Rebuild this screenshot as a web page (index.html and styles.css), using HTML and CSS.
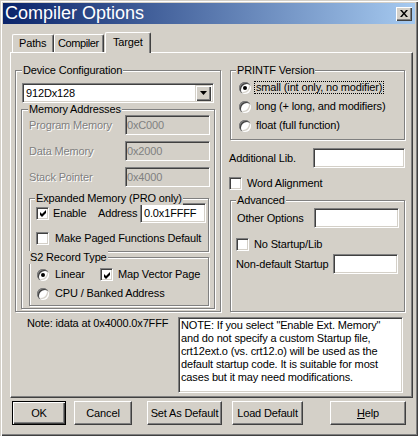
FILE: index.html
```html
<!DOCTYPE html>
<html>
<head>
<meta charset="utf-8">
<title>Compiler Options</title>
<link rel="stylesheet" href="styles.css">
</head>
<body>
<div class="window">
  <div class="titlebar">
    <span class="title">Compiler Options</span>
    <span class="close"><svg width="8" height="7" viewBox="0 0 8 7"><path d="M0 0h2l2 2.5 2-2.5h2l-3 3.5 3 3.5h-2l-2-2.5-2 2.5h-2l3-3.5z" fill="#000"/></svg></span>
  </div>
  <div class="tabs">
    <div class="tab t-paths">Paths</div>
    <div class="tab t-compiler">Compiler</div>
    <div class="tab t-target active">Target</div>
  </div>
  <div class="panel">
    <div class="toprow">
      <div class="group device">
        <span class="legend lg-device">Device Configuration</span>
        <div class="select"><span class="select-text">912Dx128</span><span class="dd-btn"><svg width="7" height="4" viewBox="0 0 7 4"><polygon points="0,0 7,0 3.5,4" fill="#000"/></svg></span></div>
        <div class="group mem">
          <span class="legend lg-mem">Memory Addresses</span>
          <div class="memrows">
            <div class="memrow"><span class="mlabel disabled">Program Memory</span><span class="input dis mem-in">0xC000</span></div>
            <div class="memrow"><span class="mlabel disabled">Data Memory</span><span class="input dis mem-in">0x2000</span></div>
            <div class="memrow"><span class="mlabel disabled">Stack Pointer</span><span class="input dis mem-in">0x4000</span></div>
          </div>
          <div class="group expanded">
            <span class="legend lg-exp">Expanded Memory (PRO only)</span>
            <div class="exprow1">
              <span class="check checked"><svg width="9" height="9" viewBox="0 0 9 9"><path d="M1 3l2 2 4-4v3l-4 4-2-2z" fill="#000"/></svg></span>
              <span class="enable-lbl">Enable</span>
              <span class="addr-lbl">Address</span>
              <span class="input addr-in">0.0x1FFFF</span>
            </div>
            <div class="exprow2">
              <span class="check"></span>
              <span class="paged-lbl">Make Paged Functions Default</span>
            </div>
          </div>
          <div class="group s2">
            <span class="legend lg-s2">S2 Record Type</span>
            <div class="s2row1">
              <span class="linear-item"><span class="radio on"></span><span class="rlbl">Linear</span></span>
              <span class="check checked"><svg width="9" height="9" viewBox="0 0 9 9"><path d="M1 3l2 2 4-4v3l-4 4-2-2z" fill="#000"/></svg></span>
              <span class="mvp-lbl">Map Vector Page</span>
            </div>
            <div class="s2row2">
              <span class="radio"></span><span class="rlbl">CPU / Banked Address</span>
            </div>
          </div>
        </div>
      </div>
      <div class="rightcol">
        <div class="group printf">
          <span class="legend lg-printf">PRINTF Version</span>
          <div class="prow first"><span class="radio on"></span><span class="plbl focus">small (int only, no modifier)</span></div>
          <div class="prow"><span class="radio"></span><span class="plbl">long (+ long, and modifiers)</span></div>
          <div class="prow"><span class="radio"></span><span class="plbl">float (full function)</span></div>
        </div>
        <div class="addlib"><span>Additional Lib.</span><span class="input addlib-in"></span></div>
        <div class="wordalign"><span class="check"></span><span class="wa-lbl">Word Alignment</span></div>
        <div class="group advanced">
          <span class="legend lg-adv">Advanced</span>
          <div class="advrow1"><span class="oo-lbl">Other Options</span><span class="input oo-in"></span></div>
          <div class="advrow2"><span class="check"></span><span class="ns-lbl">No Startup/Lib</span></div>
          <div class="advrow3"><span class="nd-lbl">Non-default Startup</span><span class="input nd-in"></span></div>
        </div>
      </div>
    </div>
    <div class="bottomrow">
      <div class="note">Note: idata at 0x4000.0x7FFF</div>
      <div class="textarea">NOTE: If you select "Enable Ext. Memory"<br>and do not specify a custom Startup file,<br>crt12ext.o (vs. crt12.o) will be used as the<br>default startup code. It is suitable for most<br>cases but it may need modifications.</div>
    </div>
  </div>
  <div class="buttons">
    <div class="btn default b-ok">OK</div>
    <div class="btn b-cancel">Cancel</div>
    <div class="btn b-set">Set As Default</div>
    <div class="btn b-load">Load Default</div>
    <div class="btn b-help"><u>H</u>elp</div>
  </div>
</div>
</body>
</html>
```

FILE: styles.css
```css
* { box-sizing: border-box; margin: 0; padding: 0; }
html, body { margin: 0; background: #d4d0c8; }
body {
  font-family: "Liberation Sans", Arial, sans-serif;
  font-size: 11px;
  letter-spacing: -0.15px;
  color: #000;
  line-height: 13px;
}
.window {
  width: 418px;
  height: 436px;
  padding: 3px;
  background: #d4d0c8;
  box-shadow: inset 1px 1px 0 #d4d0c8, inset 2px 2px 0 #fff, inset -1px -1px 0 #404040, inset -2px -2px 0 #808080;
}
.titlebar {
  height: 21px;
  display: flex;
  align-items: center;
  justify-content: space-between;
  padding: 0 3px 0 2px;
  background: linear-gradient(to right, #0a246a, #a6caf0);
}
.title {
  color: #fff;
  font-size: 18px;
  letter-spacing: 0;
  line-height: 21px;
  font-family: "Liberation Sans", Arial, sans-serif;
}
.close {
  width: 16px;
  height: 14px;
  display: flex;
  align-items: center;
  justify-content: center;
  background: #d4d0c8;
  box-shadow: inset 1px 1px 0 #fff, inset -1px -1px 0 #404040, inset -2px -2px 0 #808080;
}
.tabs {
  height: 20px;
  margin-top: 8px;
  padding-left: 9px;
  display: flex;
  align-items: flex-end;
}
.tab {
  height: 18px;
  padding: 2px 0 0 6px;
  white-space: nowrap;
  border-top: 1px solid #fff;
  border-left: 1px solid #fff;
  border-right: 1px solid #404040;
  border-radius: 2px 2px 0 0;
  box-shadow: inset -1px 0 0 #808080;
  background: #d4d0c8;
}
.t-paths { width: 42px; }
.t-compiler { width: 50px; padding-left: 3px; letter-spacing: -0.4px; }
.t-target {
  width: 46px;
  height: 21px;
  margin-left: 1px;
  margin-bottom: -1px;
  padding: 3px 0 0 7px;
  position: relative;
  z-index: 1;
}
.panel {
  width: 403px;
  height: 346px;
  margin-left: 7px;
  padding: 17px 0 0 4px;
  border-top: 1px solid #fff;
  border-left: 1px solid #fff;
  border-right: 1px solid #404040;
  border-bottom: 1px solid #404040;
  box-shadow: inset -1px -1px 0 #808080;
}
.toprow { display: flex; }
.group {
  border: 1px solid #808080;
  box-shadow: inset 1px 1px 0 #fff, 1px 1px 0 #fff;
}
.legend {
  display: block;
  width: max-content;
  height: 13px;
  line-height: 13px;
  margin-top: -7px;
  padding: 0 1px;
  background: #d4d0c8;
  position: relative;
}
.device { width: 206px; height: 242px; }
.lg-device { margin-left: 6px; }
.select {
  width: 192px;
  height: 20px;
  margin: 6px 0 0 6px;
  display: flex;
  align-items: center;
  justify-content: space-between;
  background: #fff;
  border-top: 1px solid #808080;
  border-left: 1px solid #808080;
  border-right: 1px solid #fff;
  border-bottom: 1px solid #fff;
  box-shadow: inset 1px 1px 0 #404040, inset -1px -1px 0 #d4d0c8;
  padding: 0 2px 0 2px;
}
.select-text { padding-left: 1px; }
.dd-btn {
  width: 16px;
  height: 16px;
  display: flex;
  align-items: center;
  justify-content: center;
  background: #d4d0c8;
  box-shadow: inset 1px 1px 0 #d4d0c8, inset 2px 2px 0 #fff, inset -1px -1px 0 #404040, inset -2px -2px 0 #808080;
}
.mem { width: 194px; height: 200px; margin: 6px 0 0 5px; }
.lg-mem { margin-left: 6px; }
.memrows { margin-top: -1px; padding-left: 7px; display: flex; flex-direction: column; gap: 6px; }
.memrow { display: flex; align-items: center; height: 20px; }
.mlabel { width: 96px; }
.disabled { color: #808080; text-shadow: 1px 1px 0 #fff; }
.input {
  height: 20px;
  display: flex;
  align-items: center;
  padding: 0 2px;
  background: #fff;
  border-top: 1px solid #808080;
  border-left: 1px solid #808080;
  border-right: 1px solid #fff;
  border-bottom: 1px solid #fff;
  box-shadow: inset 1px 1px 0 #404040, inset -1px -1px 0 #d4d0c8;
}
.input.dis { background: #d4d0c8; color: #808080; padding-left: 1px; }
.mem-in { width: 85px; }
.expanded { width: 180px; height: 54px; margin: 11px 0 0 7px; }
.lg-exp { margin-left: 5px; }
.exprow1 { display: flex; align-items: center; height: 20px; margin-top: -2px; padding-left: 6px; }
.check {
  width: 13px;
  height: 13px;
  flex: none;
  display: flex;
  align-items: center;
  justify-content: center;
  background: #fff;
  border-top: 1px solid #808080;
  border-left: 1px solid #808080;
  border-right: 1px solid #fff;
  border-bottom: 1px solid #fff;
  box-shadow: inset 1px 1px 0 #404040, inset -1px -1px 0 #d4d0c8;
}
.check svg { margin: 1px 0 0 1px; }
.enable-lbl { width: 45px; margin-left: 4px; }
.addr-lbl { width: 42px; }
.addr-in { width: 66px; padding-left: 3px; }
.exprow2 { display: flex; align-items: center; height: 13px; margin-top: 9px; padding-left: 6px; }
.paged-lbl { margin-left: 6px; }
.s2 { width: 180px; height: 49px; margin: 5px 0 0 7px; }
.lg-s2 { margin-left: -1px; }
.s2row1 { display: flex; align-items: center; height: 13px; margin-top: 4px; padding-left: 7px; }
.s2row2 { display: flex; align-items: center; height: 13px; margin-top: 6px; padding-left: 7px; }
.linear-item { display: flex; align-items: center; width: 63px; }
.radio {
  width: 12px;
  height: 12px;
  flex: none;
  border-radius: 50%;
  background: #fff;
  position: relative;
  box-shadow: inset 1px 1px 0 #808080, inset 2px 2px 0 #404040, inset -1px -1px 0 #fff, inset -2px -2px 0 #d4d0c8;
}
.radio.on::after {
  content: "";
  position: absolute;
  left: 4px;
  top: 4px;
  width: 4px;
  height: 4px;
  border-radius: 50%;
  background: #000;
}
.rlbl { margin-left: 6px; }
.mvp-lbl { margin-left: 5px; }
.rightcol { width: 176px; margin-left: 8px; }
.printf { width: 175px; height: 70px; margin-left: 1px; }
.lg-printf { margin-left: 5px; }
.prow { display: flex; align-items: center; height: 13px; margin-top: 6px; padding-left: 8px; }
.prow.first { margin-top: 4px; }
.plbl { margin-left: 3px; padding: 0 1px; border: 1px dotted transparent; line-height: 11px; }
.plbl.focus { border-color: #000; }
.addlib { display: flex; align-items: center; justify-content: space-between; height: 20px; margin-top: 8px; }
.addlib-in { width: 92px; }
.wordalign { display: flex; align-items: center; height: 13px; margin-top: 9px; }
.wa-lbl { margin-left: 5px; }
.advanced { width: 175px; height: 112px; margin: 10px 0 0 1px; }
.lg-adv { margin-left: 5px; }
.advrow1 { display: flex; align-items: center; height: 20px; margin-top: 1px; padding-left: 6px; }
.oo-lbl { width: 77px; }
.oo-in { width: 85px; }
.advrow2 { display: flex; align-items: center; height: 13px; margin-top: 10px; padding-left: 5px; }
.ns-lbl { margin-left: 5px; }
.advrow3 { display: flex; align-items: center; height: 20px; margin-top: 3px; padding-left: 5px; }
.nd-lbl { width: 97px; }
.nd-in { width: 65px; }
.bottomrow { display: flex; margin-top: 5px; }
.note { width: 151px; margin-left: 12px; padding-top: 0; }
.textarea {
  width: 225px;
  height: 76px;
  padding: 1px 2px 0 2px;
  line-height: 13px;
  background: #fff;
  border-top: 1px solid #808080;
  border-left: 1px solid #808080;
  border-right: 1px solid #fff;
  border-bottom: 1px solid #fff;
  box-shadow: inset 1px 1px 0 #404040, inset -1px -1px 0 #d4d0c8;
  white-space: nowrap;
}
.buttons { display: flex; margin-top: 3px; padding-left: 9px; }
.btn {
  height: 24px;
  display: flex;
  align-items: center;
  justify-content: center;
  background: #d4d0c8;
  border-top: 1px solid #fff;
  border-left: 1px solid #fff;
  border-right: 1px solid #404040;
  border-bottom: 1px solid #404040;
  box-shadow: inset -1px -1px 0 #808080;
}
.btn.default {
  border: 1px solid #000;
  box-shadow: inset 1px 1px 0 #fff, inset -1px -1px 0 #404040, inset -2px -2px 0 #808080;
}
.b-ok { width: 54px; }
.b-cancel { width: 58px; margin-left: 8px; }
.b-set { width: 75px; margin-left: 15px; }
.b-load { width: 71px; margin-left: 10px; }
.b-help { width: 76px; margin-left: 27px; }
```
